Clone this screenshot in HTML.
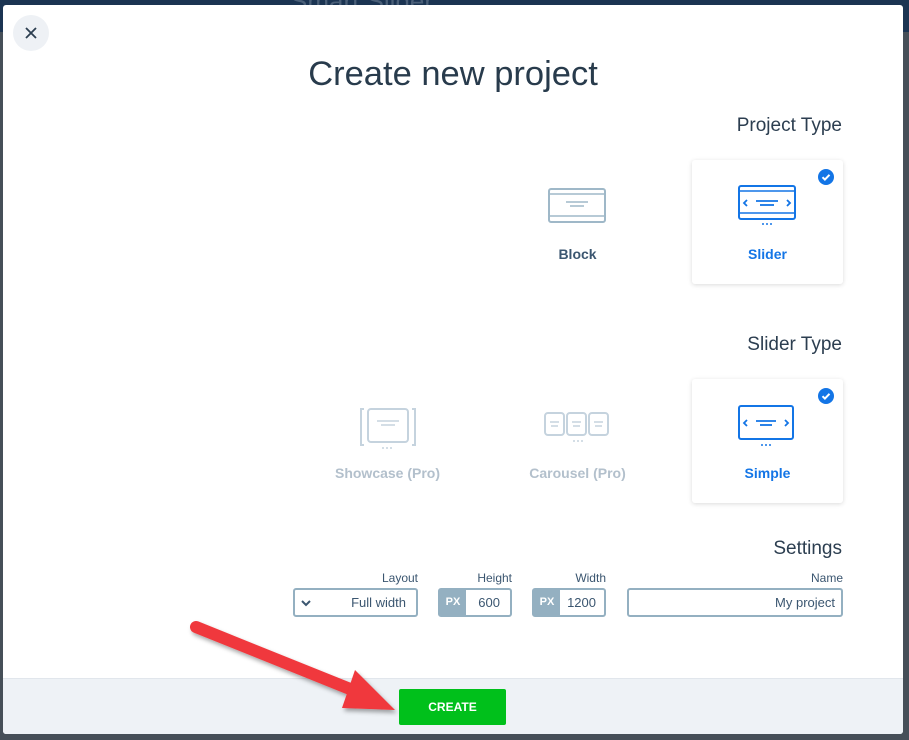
<!DOCTYPE html>
<html><head><meta charset="utf-8"><style>
*{box-sizing:border-box;margin:0;padding:0}
body{width:909px;height:740px;overflow:hidden;background:#464f58;font-family:"Liberation Sans",sans-serif;position:relative}
.topbg{position:absolute;left:0;top:0;width:909px;height:32px;background:#1b3452}
.ghost{position:absolute;left:290px;top:-14px;font-size:26px;color:#4a5f78}
.modal{position:absolute;left:3px;top:5px;width:900px;height:729px;background:#fff;border-radius:3px;overflow:hidden}
.footer{position:absolute;left:0;top:673px;width:900px;height:56px;background:#eef2f6;border-top:1px solid #e1e6ec}
.close{position:absolute;left:10px;top:10px;width:36px;height:36px;border-radius:50%;background:#eef1f5}
h1{position:absolute;left:0;width:900px;top:50px;text-align:center;font-weight:normal;font-size:34.5px;color:#283b4c}
.sec{position:absolute;right:61px;font-size:19px;color:#2c3e50}
.card{position:absolute;width:151px;height:124px;text-align:center;font-size:14px;font-weight:bold;color:#3b5670}
.card.sel{background:#fff;box-shadow:0 1px 5px rgba(0,0,0,.15);border-radius:3px;color:#1375e6}
.card.dis{color:#b3c0cc}
.card .lbl{position:absolute;left:0;width:100%;top:86px}
.card svg.ic{position:absolute;left:46px;top:26px}
.chk{position:absolute;right:9px;top:9px;width:16px;height:16px}
.lab{position:absolute;font-size:12px;color:#3b5670;text-align:right}
.inp{position:absolute;height:29px;border:2px solid #94b0c1;border-radius:3px;font-size:13px;color:#3b5670;background:#fff}
.px{position:absolute;left:0;top:0;width:26px;height:25px;background:#94b0c1;color:#fff;font-size:11px;font-weight:bold;line-height:25px;text-align:center}
.btn{position:absolute;left:399px;top:689px;width:107px;height:36px;background:#00c01b;border-radius:2px;color:#fff;font-size:12px;font-weight:bold;text-align:center;line-height:36px}
</style></head><body>
<div class="topbg"><div class="ghost">Smart Slider</div></div>
<div class="modal">
<div class="footer"></div>
<div class="close"><svg width="36" height="36"><path d="M13 13L23 23M23 13L13 23" stroke="#2c3e50" stroke-width="1.8"/></svg></div>
<h1>Create new project</h1>
<div class="sec" style="top:110px">Project Type</div>
<div class="card" style="left:499px;top:155px"><svg class="ic" width="58" height="36" style="left:46px;top:28px"><rect x="1" y="1" width="56" height="33" rx="2" fill="none" stroke="#9fb8c8" stroke-width="2"/><line x1="1" y1="6" x2="57" y2="6" stroke="#9fb8c8" stroke-width="1.5"/><line x1="1" y1="28" x2="57" y2="28" stroke="#9fb8c8" stroke-width="1.5"/><line x1="18" y1="14" x2="40" y2="14" stroke="#9fb8c8" stroke-width="1.5"/><line x1="22" y1="18" x2="36" y2="18" stroke="#9fb8c8" stroke-width="1.5"/></svg><div class="lbl">Block</div></div>
<div class="card sel" style="left:689px;top:155px"><svg class="chk"><circle cx="8" cy="8" r="8" fill="#1375e6"/><path d="M4.5 8.2l2.4 2.4 4.6-4.8" stroke="#fff" stroke-width="2" fill="none"/></svg><svg class="ic" width="58" height="44" style="left:46px;top:25px"><rect x="1" y="1" width="56" height="33" rx="2" fill="none" stroke="#1375e6" stroke-width="2"/><line x1="1" y1="6" x2="57" y2="6" stroke="#1375e6" stroke-width="1.5"/><line x1="1" y1="28" x2="57" y2="28" stroke="#1375e6" stroke-width="1.5"/><line x1="18" y1="16" x2="40" y2="16" stroke="#1375e6" stroke-width="1.8"/><line x1="22" y1="20" x2="36" y2="20" stroke="#1375e6" stroke-width="1.8"/><path d="M9 15l-3 3 3 3M49 15l3 3-3 3" stroke="#1375e6" stroke-width="1.8" fill="none"/><path d="M24 39h2M28 39h2M32 39h2" stroke="#1375e6" stroke-width="1.5"/></svg><div class="lbl">Slider</div></div>
<div class="sec" style="top:329px">Slider Type</div>
<div class="card dis" style="left:309px;top:374px"><svg class="ic" width="56" height="44" style="left:48px;top:28px"><path d="M4 2H1V38H4M52 2H55V38H52" stroke="#c5d3de" stroke-width="2" fill="none"/><rect x="8" y="2" width="40" height="33" rx="3" fill="none" stroke="#c5d3de" stroke-width="2"/><line x1="17" y1="14" x2="39" y2="14" stroke="#c5d3de" stroke-width="1.5"/><line x1="21" y1="18" x2="35" y2="18" stroke="#c5d3de" stroke-width="1.5"/><path d="M22 41h2M26 41h2M30 41h2" stroke="#c5d3de" stroke-width="1.5"/></svg><div class="lbl">Showcase (Pro)</div></div>
<div class="card dis" style="left:499px;top:374px"><svg class="ic" width="66" height="40" style="left:42px;top:33px"><g fill="none" stroke="#c5d3de" stroke-width="2"><rect x="1" y="1" width="19" height="22" rx="3"/><rect x="23" y="1" width="19" height="22" rx="3"/><rect x="45" y="1" width="19" height="22" rx="3"/></g><g stroke="#c5d3de" stroke-width="1.5"><path d="M6 10h9M7 14h7M28 10h9M29 14h7M50 10h9M51 14h7"/><path d="M29 29h2M33 29h2M37 29h2"/></g></svg><div class="lbl">Carousel (Pro)</div></div>
<div class="card sel" style="left:689px;top:374px"><svg class="chk"><circle cx="8" cy="8" r="8" fill="#1375e6"/><path d="M4.5 8.2l2.4 2.4 4.6-4.8" stroke="#fff" stroke-width="2" fill="none"/></svg><svg class="ic" width="58" height="44" style="left:46px;top:26px"><rect x="1" y="1" width="54" height="33" rx="2" fill="none" stroke="#1375e6" stroke-width="2"/><line x1="18" y1="16" x2="38" y2="16" stroke="#1375e6" stroke-width="1.8"/><line x1="22" y1="20" x2="34" y2="20" stroke="#1375e6" stroke-width="1.8"/><path d="M9 15l-3 3 3 3M47 15l3 3-3 3" stroke="#1375e6" stroke-width="1.8" fill="none"/><path d="M23 40h2M27 40h2M31 40h2" stroke="#1375e6" stroke-width="1.5"/></svg><div class="lbl">Simple</div></div>
<div class="sec" style="top:533px">Settings</div>
<div class="lab" style="left:290px;width:125px;top:566px">Layout</div>
<div class="lab" style="left:435px;width:74px;top:566px">Height</div>
<div class="lab" style="left:529px;width:74px;top:566px">Width</div>
<div class="lab" style="left:624px;width:216px;top:566px">Name</div>
<div class="inp" style="left:290px;top:583px;width:125px"><svg width="12" height="10" style="position:absolute;left:5px;top:9px"><path d="M2 2l4 4 4-4" stroke="#3b5670" stroke-width="2" fill="none"/></svg><span style="position:absolute;right:10px;top:5px">Full width</span></div>
<div class="inp" style="left:435px;top:583px;width:74px"><div class="px">PX</div><span style="position:absolute;right:10px;top:5px">600</span></div>
<div class="inp" style="left:529px;top:583px;width:74px"><div class="px">PX</div><span style="position:absolute;right:8px;top:5px">1200</span></div>
<div class="inp" style="left:624px;top:583px;width:216px"><span style="position:absolute;right:6px;top:5px">My project</span></div>
</div>
<div class="btn">CREATE</div>
<svg width="909" height="740" style="position:absolute;left:0;top:0;pointer-events:none"><defs><filter id="s"><feDropShadow dx="2" dy="3" stdDeviation="2" flood-opacity=".35"/></filter></defs><g filter="url(#s)"><line x1="196" y1="627" x2="360" y2="693" stroke="#f0373c" stroke-width="12" stroke-linecap="round"/><path d="M395 710L355 670L342 708Z" fill="#f0373c"/></g></svg>
</body></html>
